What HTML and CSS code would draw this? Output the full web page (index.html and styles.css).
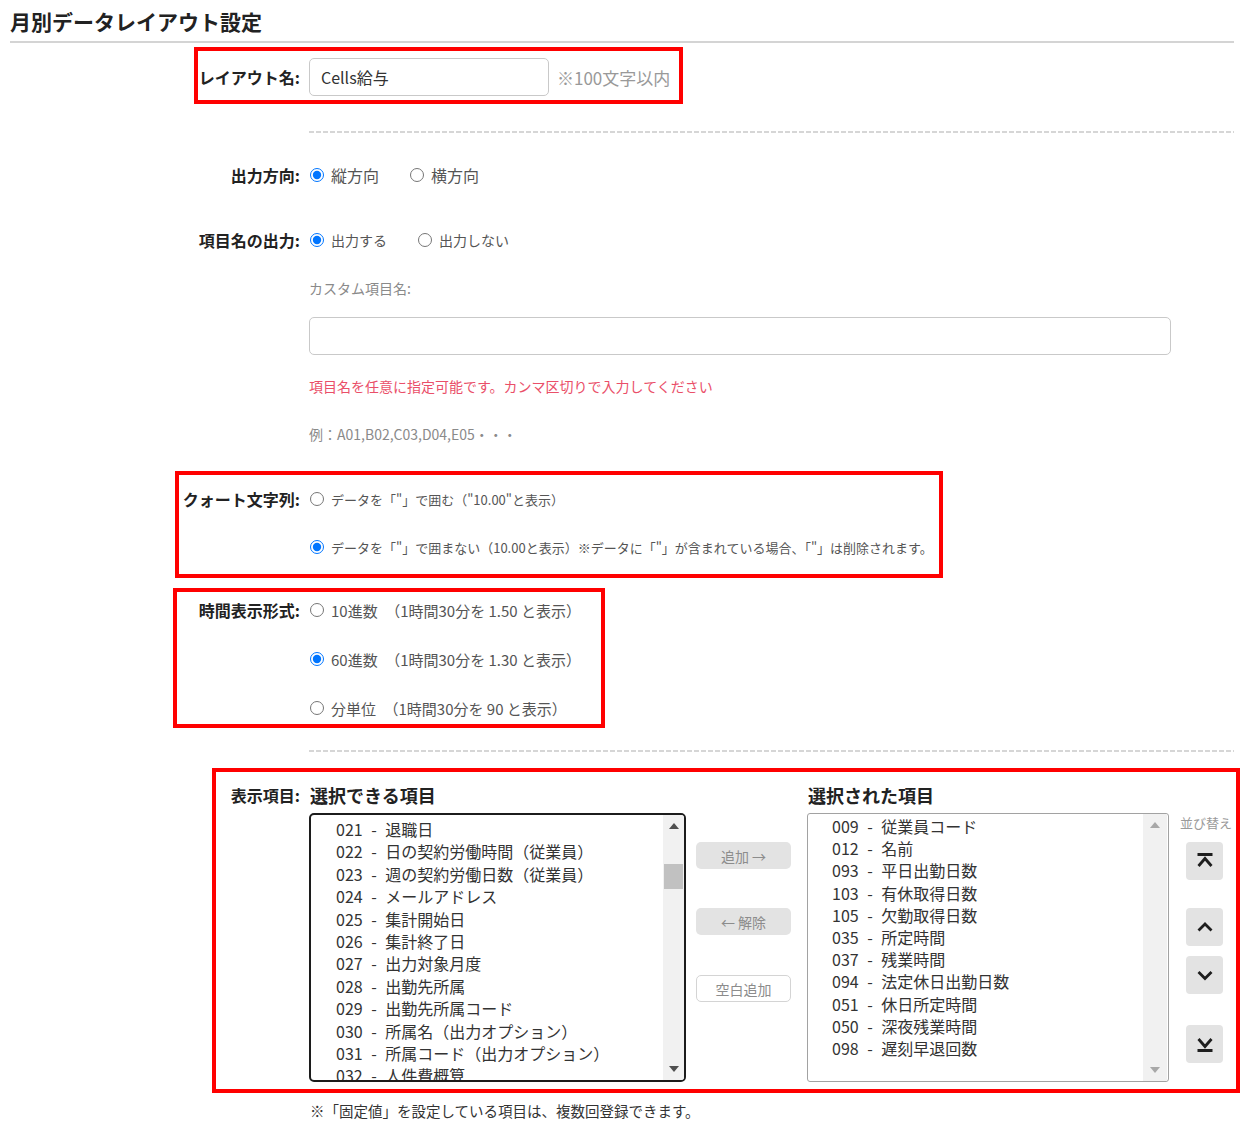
FILE: index.html
```html
<!DOCTYPE html>
<html lang="ja">
<head>
    <meta charset="UTF-8">
    <meta name="viewport" content="width=device-width, initial-scale=1.0">
    <title>月別データレイアウト設定</title>
    <link rel="stylesheet" href="styles.css">
</head>
<body>
    <div class="page">
        <h1 class="page-title">月別データレイアウト設定</h1>

        <div class="field field-name">
            <div class="field-label">レイアウト名:</div>
            <div class="field-body inline">
                <input type="text" class="text-input name-input" value="Cells給与">
                <span class="note">※100文字以内</span>
            </div>
            <div class="mark mark-name"></div>
        </div>

        <div class="divider"></div>

        <div class="field field-direction">
            <div class="field-label">出力方向:</div>
            <div class="field-body">
                <div class="choices">
                    <label class="choice"><input type="radio" name="direction" checked>縦方向</label>
                    <label class="choice"><input type="radio" name="direction">横方向</label>
                </div>
            </div>
        </div>

        <div class="field field-header">
            <div class="field-label">項目名の出力:</div>
            <div class="field-body">
                <div class="choices small">
                    <label class="choice"><input type="radio" name="header" checked>出力する</label>
                    <label class="choice"><input type="radio" name="header">出力しない</label>
                </div>
                <div class="sub-label">カスタム項目名:</div>
                <input type="text" class="text-input custom-input">
                <div class="hint">項目名を任意に指定可能です。カンマ区切りで入力してください</div>
                <div class="example">例：A01,B02,C03,D04,E05・・・</div>
            </div>
        </div>

        <div class="field field-quote">
            <div class="field-label">クォート文字列:</div>
            <div class="field-body stack">
                <label class="choice quote"><input type="radio" name="quote">データを「"」で囲む（"10.00"と表示）</label>
                <label class="choice quote"><input type="radio" name="quote" checked>データを「"」で囲まない（10.00と表示）※データに「"」が含まれている場合、「"」は削除されます。</label>
            </div>
            <div class="mark mark-quote"></div>
        </div>

        <div class="field field-time">
            <div class="field-label">時間表示形式:</div>
            <div class="field-body stack">
                <label class="choice time"><input type="radio" name="time">10進数　（1時間30分を 1.50 と表示）</label>
                <label class="choice time"><input type="radio" name="time" checked>60進数　（1時間30分を 1.30 と表示）</label>
                <label class="choice time"><input type="radio" name="time">分単位　（1時間30分を 90 と表示）</label>
            </div>
            <div class="mark mark-time"></div>
        </div>

        <div class="divider divider-lower"></div>

        <div class="field field-columns">
            <div class="field-label">表示項目:</div>
            <div class="field-body">
                <div class="picker-heads">
                    <div class="picker-head source-head">選択できる項目</div>
                    <div class="picker-head">選択された項目</div>
                </div>
                <div class="picker">
                    <div class="listbox listbox-source">
                        <ul class="listbox-items">
                            <li>021 - 退職日</li>
                            <li>022 - 日の契約労働時間（従業員）</li>
                            <li>023 - 週の契約労働日数（従業員）</li>
                            <li>024 - メールアドレス</li>
                            <li>025 - 集計開始日</li>
                            <li>026 - 集計終了日</li>
                            <li>027 - 出力対象月度</li>
                            <li>028 - 出勤先所属</li>
                            <li>029 - 出勤先所属コード</li>
                            <li>030 - 所属名（出力オプション）</li>
                            <li>031 - 所属コード（出力オプション）</li>
                            <li>032 - 人件費概算</li>
                        </ul>
                        <div class="scrollbar">
                            <span class="scroll-arrow up"></span>
                            <span class="scroll-track"><span class="scroll-thumb"></span></span>
                            <span class="scroll-arrow down"></span>
                        </div>
                    </div>

                    <div class="move-buttons">
                        <button class="move-btn">追加 →</button>
                        <button class="move-btn">← 解除</button>
                        <button class="move-btn blank">空白追加</button>
                    </div>

                    <div class="listbox listbox-target">
                        <ul class="listbox-items">
                            <li>009 - 従業員コード</li>
                            <li>012 - 名前</li>
                            <li>093 - 平日出勤日数</li>
                            <li>103 - 有休取得日数</li>
                            <li>105 - 欠勤取得日数</li>
                            <li>035 - 所定時間</li>
                            <li>037 - 残業時間</li>
                            <li>094 - 法定休日出勤日数</li>
                            <li>051 - 休日所定時間</li>
                            <li>050 - 深夜残業時間</li>
                            <li>098 - 遅刻早退回数</li>
                        </ul>
                        <div class="scrollbar idle">
                            <span class="scroll-arrow up"></span>
                            <span class="scroll-track"></span>
                            <span class="scroll-arrow down"></span>
                        </div>
                    </div>

                    <div class="sorter">
                        <div class="sorter-title">並び替え</div>
                        <button class="sort-btn first" title="先頭へ">
                            <svg width="22" height="22" viewBox="0 0 22 22"><path d="M3.5 4.5h15M4.5 16l6.5-7.5 6.5 7.5"/></svg>
                        </button>
                        <button class="sort-btn up" title="上へ">
                            <svg width="22" height="22" viewBox="0 0 22 22"><path d="M4.5 14.5l6.5-6.5 6.5 6.5"/></svg>
                        </button>
                        <button class="sort-btn down" title="下へ">
                            <svg width="22" height="22" viewBox="0 0 22 22"><path d="M4.5 8l6.5 6.5 6.5-6.5"/></svg>
                        </button>
                        <button class="sort-btn last" title="末尾へ">
                            <svg width="22" height="22" viewBox="0 0 22 22"><path d="M4.5 6l6.5 7.5 6.5-7.5M3.5 17.5h15"/></svg>
                        </button>
                    </div>
                </div>
            </div>
            <div class="mark mark-columns"></div>
        </div>

        <p class="footnote">※「固定値」を設定している項目は、複数回登録できます。</p>
    </div>
</body>
</html>
```

FILE: styles.css
```css
:root {
    --text-dark: #222;
    --text-body: #333;
    --text-muted: #555;
    --text-light: #8a8a8a;
    --border-color: #c9c9c9;
    --mark-color: #ff0000;
    --button-bg: #e3e3e3;
}

* {
    box-sizing: border-box;
}

body {
    margin: 0;
    background: #fff;
    font-family: "Noto Sans CJK JP", "Noto Sans", sans-serif;
    color: var(--text-body);
}

.page {
    width: 1240px;
    padding: 0 6px 0 10px;
}

.page-title {
    margin: 0;
    padding: 7px 0 6px;
    font-size: 21px;
    line-height: 28px;
    font-weight: 700;
    color: var(--text-dark);
    border-bottom: 2px solid #d4d4d4;
}

/* label column on the left, controls on the right */
.field {
    position: relative;
    display: grid;
    grid-template-columns: 290px 1fr;
    column-gap: 9px;
    align-items: start;
}

.field-label {
    text-align: right;
    font-size: 16px;
    line-height: 24px;
    font-weight: 700;
    color: var(--text-dark);
    white-space: nowrap;
}

.field-body.inline {
    display: flex;
    align-items: center;
}

.field-body.stack {
    display: flex;
    flex-direction: column;
}

.field-name {
    margin-top: 15px;
    align-items: center;
}

.field-direction { margin-top: 30px; }
.field-header { margin-top: 41px; }
.field-quote { margin-top: 41px; }
.field-time { margin-top: 39px; }
.field-columns { margin-top: 31px; }

.text-input {
    display: block;
    height: 38px;
    border: 1px solid var(--border-color);
    border-radius: 5px;
    font-family: inherit;
    font-size: 16px;
    color: var(--text-body);
    padding: 0 11px;
    outline: none;
}

.name-input {
    width: 240px;
}

.custom-input {
    width: 862px;
    margin-top: 17px;
}

.note {
    margin-left: 8px;
    font-size: 17px;
    color: #999;
    white-space: nowrap;
}

.divider {
    height: 2px;
    margin: 35px 0 0 299px;
    background: repeating-linear-gradient(90deg, #d6d6d6 0 5px, transparent 5px 7px);
}

.divider-lower {
    margin-top: 30px;
}

/* radio options */
.choices {
    display: flex;
}

.choice {
    display: inline-flex;
    align-items: center;
    height: 24px;
    margin-right: 30px;
    font-size: 16px;
    color: var(--text-muted);
    white-space: nowrap;
}

.choice input {
    width: 14px;
    height: 14px;
    margin: 0 7px 0 1px;
}

.choices.small .choice {
    font-size: 14px;
}

.choice.quote {
    font-size: 13px;
}

.choice.quote + .choice.quote {
    margin-top: 24px;
}

.choice.time {
    font-size: 15px;
}

.choice.time + .choice.time {
    margin-top: 25px;
}

.sub-label {
    margin-top: 24px;
    font-size: 14px;
    line-height: 24px;
    color: var(--text-light);
}

.hint {
    margin-top: 19px;
    font-size: 14px;
    line-height: 24px;
    color: #ea4f69;
}

.example {
    margin-top: 24px;
    font-size: 14px;
    line-height: 24px;
    color: var(--text-light);
}

/* red annotation frames drawn over the form */
.mark {
    position: absolute;
    border: 4px solid var(--mark-color);
    pointer-events: none;
}

.mark-name { left: 184px; top: -11px; width: 489px; height: 57px; }
.mark-quote { left: 165px; top: -16px; width: 768px; height: 107px; }
.mark-time { left: 163px; top: -10px; width: 432px; height: 140px; }
.mark-columns { left: 202px; top: -15px; width: 1028px; height: 325px; }

/* column picker */
.picker-heads {
    display: flex;
    height: 24px;
}

.picker-head {
    font-size: 18px;
    line-height: 24px;
    font-weight: 700;
    color: var(--text-dark);
    padding-left: 1px;
}

.source-head {
    width: 498px;
}

.picker {
    display: flex;
    align-items: flex-start;
    margin-top: 6px;
}

.listbox {
    display: flex;
    height: 269px;
    background: #fff;
    overflow: hidden;
}

.listbox-source {
    width: 377px;
    border: 2px solid #1c1c1c;
    border-radius: 5px;
}

.listbox-target {
    width: 362px;
    margin-left: 16px;
    border: 1px solid #a2a2a2;
    border-radius: 3px;
}

.listbox-items {
    flex: 1;
    margin: 0;
    padding: 3px 0 0 25px;
    list-style: none;
    font-size: 16px;
    line-height: 22.4px;
    word-spacing: 5px;
    color: var(--text-body);
    white-space: nowrap;
    overflow: hidden;
}

.listbox-target .listbox-items {
    padding: 1px 0 0 24px;
    line-height: 22.2px;
}

.scrollbar {
    display: flex;
    flex-direction: column;
    width: 21px;
    background: #f1f1f1;
}

.listbox-target .scrollbar {
    width: 24px;
    margin-right: 1px;
}

.scroll-arrow {
    display: flex;
    justify-content: center;
    align-items: center;
    height: 22px;
}

.scroll-arrow::before {
    content: "";
    border-left: 5px solid transparent;
    border-right: 5px solid transparent;
}

.scroll-arrow.up::before {
    border-bottom: 6px solid #4f4f4f;
}

.scroll-arrow.down::before {
    border-top: 6px solid #4f4f4f;
}

.scrollbar.idle .scroll-arrow.up::before {
    border-bottom-color: #a8a8a8;
}

.scrollbar.idle .scroll-arrow.down::before {
    border-top-color: #a8a8a8;
}

.scroll-track {
    flex: 1;
    padding: 27px 1px 0;
}

.scroll-thumb {
    display: block;
    height: 25px;
    background: #c1c1c1;
}

.move-buttons {
    display: flex;
    flex-direction: column;
    width: 95px;
    margin-left: 10px;
}

.move-btn {
    height: 27px;
    margin-top: 39px;
    border: none;
    border-radius: 5px;
    background: var(--button-bg);
    font-family: inherit;
    font-size: 14px;
    color: #8c8c8c;
    padding: 0;
}

.move-btn:first-child {
    margin-top: 29px;
}

.move-btn.blank {
    margin-top: 40px;
    background: #fff;
    border: 1px solid #d4d4d4;
}

.sorter {
    display: flex;
    flex-direction: column;
    width: 54px;
    margin-left: 11px;
}

.sorter-title {
    font-size: 13px;
    line-height: 20px;
    color: #9a9a9a;
    white-space: nowrap;
}

.sort-btn {
    display: flex;
    justify-content: center;
    align-items: center;
    width: 37px;
    height: 38px;
    margin-left: 6px;
    padding: 0;
    border: none;
    border-radius: 4px;
    background: var(--button-bg);
}

.sort-btn svg path {
    fill: none;
    stroke: #1e1e1e;
    stroke-width: 2.8;
}

.sort-btn.first { margin-top: 9px; }
.sort-btn.up { margin-top: 28px; }
.sort-btn.down { margin-top: 10px; }
.sort-btn.last { margin-top: 31px; }

.footnote {
    margin: 17px 0 0 300px;
    font-size: 14.5px;
    line-height: 24px;
    color: var(--text-body);
}
```
